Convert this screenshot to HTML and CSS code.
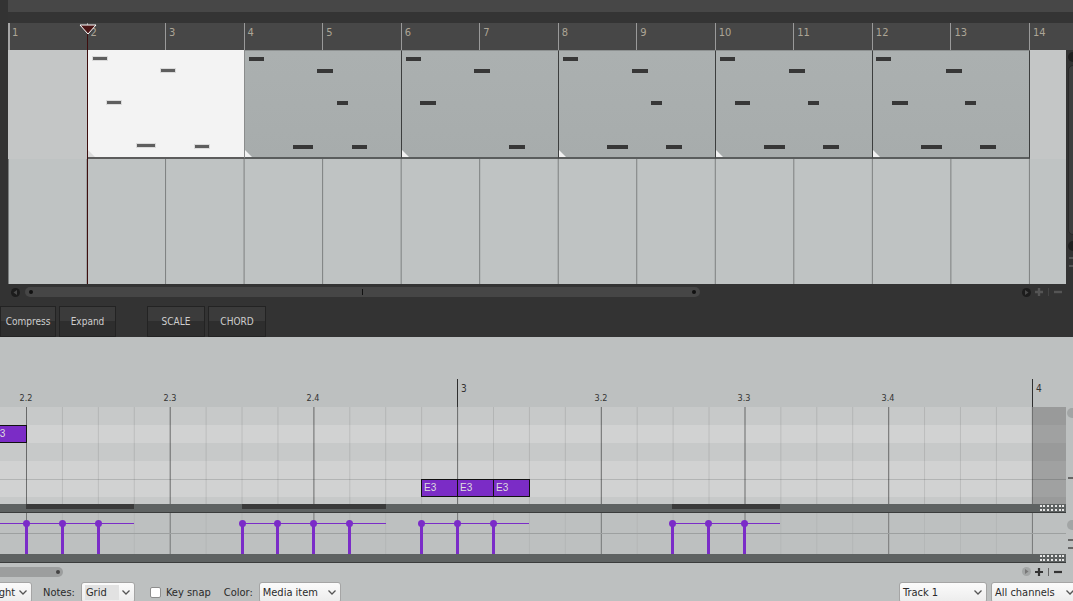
FILE: index.html
```html
<!DOCTYPE html>
<html lang="en">
<head>
<meta charset="utf-8">
<title>Editor</title>
<link rel="stylesheet" href="styles.css">
</head>
<body>
<div class="app">
  <section class="arrange">
    <div class="gutter"></div>
    <div class="arr-main">
      <div class="topbar"></div>
      <div class="topgap"></div>
      <div class="ruler">
        <div class="bar first">1</div><div class="bar">2</div><div class="bar">3</div><div class="bar">4</div><div class="bar">5</div><div class="bar">6</div><div class="bar">7</div><div class="bar">8</div><div class="bar">9</div><div class="bar">10</div><div class="bar">11</div><div class="bar">12</div><div class="bar">13</div><div class="bar">14</div>
      </div>
      <div class="lanes">
        <div class="tracks">
          <div class="track track1">
            <div class="lead"></div>
            <div class="clip clip-sel">
              <i class="n" style="left:4px;top:6px;width:16px"></i>
              <i class="n" style="left:72px;top:18px;width:16px"></i>
              <i class="n" style="left:18px;top:50px;width:16px"></i>
              <i class="n" style="left:48px;top:93px;width:20px"></i>
              <i class="n" style="left:106px;top:94px;width:16px"></i>
              <b class="fade"></b>
            </div>
            <div class="clip">
              <i class="n" style="left:4px;top:6px;width:15px"></i>
              <i class="n" style="left:72px;top:18px;width:16px"></i>
              <i class="n" style="left:92px;top:50px;width:11px"></i>
              <i class="n" style="left:48px;top:94px;width:20px"></i>
              <i class="n" style="left:107px;top:94px;width:15px"></i>
              <b class="fade"></b>
            </div>
            <div class="clip">
              <i class="n" style="left:4px;top:6px;width:15px"></i>
              <i class="n" style="left:72px;top:18px;width:16px"></i>
              <i class="n" style="left:18px;top:50px;width:16px"></i>
              <i class="n" style="left:107px;top:94px;width:16px"></i>
              <b class="fade"></b>
            </div>
            <div class="clip">
              <i class="n" style="left:4px;top:6px;width:15px"></i>
              <i class="n" style="left:73px;top:18px;width:16px"></i>
              <i class="n" style="left:92px;top:50px;width:11px"></i>
              <i class="n" style="left:48px;top:94px;width:21px"></i>
              <i class="n" style="left:107px;top:94px;width:16px"></i>
              <b class="fade"></b>
            </div>
            <div class="clip">
              <i class="n" style="left:4px;top:6px;width:15px"></i>
              <i class="n" style="left:73px;top:18px;width:16px"></i>
              <i class="n" style="left:19px;top:50px;width:15px"></i>
              <i class="n" style="left:92px;top:50px;width:11px"></i>
              <i class="n" style="left:48px;top:94px;width:21px"></i>
              <i class="n" style="left:107px;top:94px;width:16px"></i>
              <b class="fade"></b>
            </div>
            <div class="clip">
              <i class="n" style="left:3px;top:6px;width:15px"></i>
              <i class="n" style="left:73px;top:18px;width:16px"></i>
              <i class="n" style="left:19px;top:50px;width:16px"></i>
              <i class="n" style="left:92px;top:50px;width:11px"></i>
              <i class="n" style="left:48px;top:94px;width:21px"></i>
              <i class="n" style="left:107px;top:94px;width:16px"></i>
              <b class="fade"></b>
            </div>
          </div>
          <div class="track track2"></div>
        </div>
        <div class="vscroll">
          <span class="vs-btn"></span>
          <span class="vs-track"></span>
          <span class="vs-btn"></span>
          <span class="vs-mark"></span>
          <span class="vs-mark"></span>
        </div>
      </div>
      <div class="playhead"></div>
      <svg class="marker" width="18" height="11" viewBox="0 0 18 11"><polygon points="1,1 17,1 9,10" fill="#4a1515" stroke="#ffffff" stroke-width="1"/></svg>
    </div>
  </section>

  <div class="hscroll">
    <span class="circ dark"><svg width="9" height="9" viewBox="0 0 9 9"><polygon points="6,2 6,7 2.5,4.5" fill="#4a4a4a"/></svg></span>
    <div class="hs-track"><span class="hs-dot"></span><span class="hs-mark"></span><span class="hs-dot end"></span></div>
    <div class="zoomctl">
      <span class="circ dark"><svg width="9" height="9" viewBox="0 0 9 9"><polygon points="3,2 3,7 6.5,4.5" fill="#4a4a4a"/></svg></span>
      <svg class="pm" width="10" height="10" viewBox="0 0 10 10"><path d="M5 1v8M1 5h8" stroke="#555" stroke-width="2.4"/></svg>
      <span class="sep"></span>
      <svg class="pm" width="10" height="10" viewBox="0 0 10 10"><path d="M1 5h8" stroke="#555" stroke-width="2.4"/></svg>
    </div>
  </div>

  <div class="toolbar">
    <div class="btn w56">Compress</div>
    <div class="btn w57">Expand</div>
    <div class="btn w58 gap">SCALE</div>
    <div class="btn w58">CHORD</div>
  </div>

  <section class="midi">
    <div class="midi-body">
      <div class="midi-main">
        <div class="mruler">
          <span class="blab" style="left:26px">2.2</span>
          <span class="blab" style="left:170px">2.3</span>
          <span class="blab" style="left:313px">2.4</span>
          <span class="barline" style="left:457px"></span>
          <span class="barlab" style="left:461px">3</span>
          <span class="blab" style="left:601px">3.2</span>
          <span class="blab" style="left:744px">3.3</span>
          <span class="blab" style="left:888px">3.4</span>
          <span class="barline" style="left:1032px"></span>
          <span class="barlab" style="left:1036px">4</span>
        </div>
        <div class="roll">
          <div class="row dk"></div>
          <div class="row lt"></div>
          <div class="row dk"></div>
          <div class="row lt"></div>
          <div class="row lt sepline"></div>
          <div class="row dk short"></div>
          <div class="grid"></div>
          <div class="endzone"></div>
          <div class="note" style="left:-10px;top:18px;width:37px">E3</div>
          <div class="note" style="left:421px;top:72px;width:37px">E3</div>
          <div class="note" style="left:457px;top:72px;width:37px">E3</div>
          <div class="note" style="left:493px;top:72px;width:37px">E3</div>
        </div>
        <div class="mbar">
          <span class="seg" style="left:26px;width:108px"></span>
          <span class="seg" style="left:242px;width:144px"></span>
          <span class="seg" style="left:672px;width:108px"></span>
          <span class="grip"></span>
        </div>
        <div class="vel">
          <div class="vgrid"></div>
          <span class="hline"></span>
          <span class="vline" style="left:0;width:134px"></span>
          <span class="vline" style="left:242px;width:144px"></span>
          <span class="vline" style="left:421px;width:108px"></span>
          <span class="vline" style="left:672px;width:108px"></span>
          <span class="stem" style="left:25px"></span>
          <span class="stem" style="left:61px"></span>
          <span class="stem" style="left:97px"></span>
          <span class="stem" style="left:241px"></span>
          <span class="stem" style="left:276px"></span>
          <span class="stem" style="left:312px"></span>
          <span class="stem" style="left:348px"></span>
          <span class="stem" style="left:420px"></span>
          <span class="stem" style="left:456px"></span>
          <span class="stem" style="left:492px"></span>
          <span class="stem" style="left:671px"></span>
          <span class="stem" style="left:707px"></span>
          <span class="stem" style="left:743px"></span>
        </div>
        <div class="mbar"><span class="grip"></span></div>
      </div>
      <div class="mside">
        <span class="ms-circ c1"></span>
        <span class="ms-dash d1"></span>
        <span class="ms-circ c2"></span>
        <span class="ms-dash d2"></span>
        <span class="ms-dash d3"></span>
      </div>
    </div>
    <div class="mscroll">
      <div class="thumb"><span class="tdot"></span></div>
      <div class="zoomctl light">
        <span class="circ lite"><svg width="9" height="9" viewBox="0 0 9 9"><polygon points="3,2 3,7 6.5,4.5" fill="#777"/></svg></span>
        <svg class="pm" width="10" height="10" viewBox="0 0 10 10"><path d="M5 1v8M1 5h8" stroke="#333" stroke-width="2.2"/></svg>
        <span class="sep dk"></span>
        <svg class="pm" width="10" height="10" viewBox="0 0 10 10"><path d="M1 5h8" stroke="#333" stroke-width="2.2"/></svg>
      </div>
    </div>
    <div class="mtools">
      <div class="dd dd-first"><span class="ddtext">Right</span><svg class="chev" width="8" height="5" viewBox="0 0 8 5"><path d="M0.5 0.5 4 4 7.5 0.5" fill="none" stroke="#555" stroke-width="1.3"/></svg></div>
      <span class="lbl l-notes">Notes:</span>
      <div class="dd dd-grid"><span class="ddtext hl">Grid</span><svg class="chev" width="8" height="5" viewBox="0 0 8 5"><path d="M0.5 0.5 4 4 7.5 0.5" fill="none" stroke="#555" stroke-width="1.3"/></svg></div>
      <span class="check"></span>
      <span class="lbl l-key">Key snap</span>
      <span class="lbl l-color">Color:</span>
      <div class="dd dd-media"><span class="ddtext">Media item</span><svg class="chev" width="8" height="5" viewBox="0 0 8 5"><path d="M0.5 0.5 4 4 7.5 0.5" fill="none" stroke="#555" stroke-width="1.3"/></svg></div>
      <div class="dd dd-track"><span class="ddtext">Track 1</span><svg class="chev" width="8" height="5" viewBox="0 0 8 5"><path d="M0.5 0.5 4 4 7.5 0.5" fill="none" stroke="#555" stroke-width="1.3"/></svg></div>
      <div class="dd dd-chan"><span class="ddtext">All channels</span><svg class="chev" width="8" height="5" viewBox="0 0 8 5"><path d="M0.5 0.5 4 4 7.5 0.5" fill="none" stroke="#555" stroke-width="1.3"/></svg></div>
    </div>
  </section>
</div>
</body>
</html>
```

FILE: styles.css
```css
* { box-sizing: border-box; margin: 0; padding: 0; }
html, body { width: 1073px; height: 601px; overflow: hidden; }
body { background: #333; font-family: "DejaVu Sans Condensed", "DejaVu Sans", "Liberation Sans", sans-serif; }
.app { width: 1073px; height: 601px; display: flex; flex-direction: column; overflow: hidden; }

/* ---------- arrange view ---------- */
.arrange { display: flex; height: 284px; flex: 0 0 284px; }
.gutter { width: 8px; background: #333; }
.arr-main { width: 1065px; position: relative; display: flex; flex-direction: column; }
.topbar { height: 12px; background: #474747; }
.topgap { height: 11px; background: #343434; }
.ruler { height: 27px; background: #474747; display: flex; overflow: hidden; }
.bar { flex: 0 0 78.54px; border-left: 1px solid #9a9a9a; padding: 3px 0 0 3px; font-size: 11px; line-height: 13px; color: #aca596; }
.bar.first { border-left: 2px solid #a6a6a6; padding-left: 2px; }

.lanes { flex: 1; display: flex; }
.tracks { width: 1058px; display: flex; flex-direction: column; }
.track1 { height: 109px; background: #c4c6c6; display: flex; }
.track2 { flex: 1; background-color: #bfc3c3;
  background-image: linear-gradient(to right, #7c7f7f 1px, transparent 1px);
  background-size: 78.54px 100%; background-position: 0 0; }
.lead { flex: 0 0 80px; }
.clip { flex: 0 0 157px; height: 109px; position: relative;
  background: linear-gradient(#abb0b0, #a7acac);
  border-right: 1px solid #3c3e3e; border-top: 1px solid #8d9191; border-bottom: 2px solid #5a5d5d; }
.clip-sel { background: #f3f3f3; border-top: 0; border-right: 1px solid #8a8c8c; border-bottom: 2px solid #5c5c5c; }
.n { position: absolute; height: 4px; background: #373737; display: block; }
.clip-sel .n { background: #5e5e5e; border: 1px solid #dadada; height: 5px; }
.fade { position: absolute; left: 0; bottom: 0; width: 0; height: 0;
  border-left: 7px solid #f2f2f2; border-top: 7px solid transparent; }
.clip-sel .fade { border-left-color: #dcdcdc; }

.vscroll { width: 7px; background: #333; display: flex; flex-direction: column; align-items: flex-start; overflow: hidden; }
.vs-btn { width: 10px; height: 10px; border-radius: 50%; background: #1f1f1f; margin: 2px 0 0 2px; flex: 0 0 10px; }
.vs-track { width: 10px; flex: 0 0 170px; margin: 3px 0 4px 2px; background: #3e3e3e; border: 1px solid #2a2a2a; border-radius: 5px; }
.vs-mark { width: 8px; height: 2px; background: #555; margin: 6px 0 0 3px; }

.playhead { position: absolute; left: 79px; top: 33px; bottom: 0; width: 1px; background: #3e0e0e; }
.marker { position: absolute; left: 71px; top: 24px; }

/* ---------- arrange scrollbar ---------- */
.hscroll { height: 16px; flex: 0 0 16px; display: flex; align-items: center; background: #333; }
.circ { width: 9px; height: 9px; border-radius: 50%; display: flex; }
.circ.dark { background: #1c1c1c; }
.circ.lite { background: #a3a6a6; }
.hscroll > .circ { margin-left: 11px; }
.hs-track { margin-left: 5px; width: 675px; height: 10px; background: #464646; border-radius: 5px; position: relative; }
.hs-dot { position: absolute; left: 4px; top: 3px; width: 4px; height: 4px; border-radius: 50%; background: #111; }
.hs-dot.end { left: auto; right: 4px; }
.hs-mark { position: absolute; left: 337px; top: 2px; width: 1px; height: 6px; background: #111; }
.zoomctl { margin-left: auto; margin-right: 10px; display: flex; align-items: center; gap: 3px; }
.pm { display: block; }
.sep { width: 1px; height: 8px; background: #444; margin: 0 1px; }
.sep.dk { background: #666; }

/* ---------- toolbar ---------- */
.toolbar { height: 37px; flex: 0 0 37px; display: flex; align-items: flex-end; gap: 3px; background: #333; }
.btn { height: 31px; display: flex; align-items: center; justify-content: center;
  background: linear-gradient(#3b3b3b 0 50%, #2e2e2e 50% 100%);
  border: 1px solid #232323; color: #cdcdcd; font-size: 10px; }
.w56 { width: 56px; }
.w57 { width: 57px; }
.w58 { width: 58px; }
.btn.gap { margin-left: 28px; }

/* ---------- MIDI editor ---------- */
.midi { flex: 1; display: flex; flex-direction: column; background: #bdc0c0; }
.midi-body { display: flex; }
.midi-main { width: 1066px; display: flex; flex-direction: column; }
.mruler { height: 70px; position: relative; }
.blab { position: absolute; top: 56px; transform: translateX(-50%); font-size: 9px; line-height: 10px; color: #333; }
.barlab { position: absolute; top: 46px; font-size: 10px; line-height: 11px; color: #333; }
.barline { position: absolute; top: 42px; bottom: 0; width: 1px; background: #2e2e2e; }

.roll { height: 97px; position: relative; display: flex; flex-direction: column; }
.row { height: 18px; flex: 0 0 18px; }
.row.dk { background: #c7c9c9; }
.row.lt { background: #d1d2d2; }
.row.sepline { border-top: 1px solid #b2b4b4; }
.row.short { flex: 0 0 7px; height: 7px; }
.grid, .vgrid { position: absolute; left: 0; top: 0; bottom: 0; width: 1066px;
  background-image: linear-gradient(to right, rgba(0,0,0,0.42) 1px, transparent 1px),
                    linear-gradient(to right, rgba(0,0,0,0.10) 1px, transparent 1px);
  background-size: 143.71px 100%, 35.93px 100%;
  background-position: 26px 0, 26px 0; }
.grid { width: 1040px; }
.endzone { position: absolute; left: 1033px; top: 0; bottom: 0; right: 0; background: rgba(0,0,0,0.23); }
.note { position: absolute; height: 18px; background: #7b2cc6; border: 1px solid #111;
  color: #dedede; font-size: 10px; line-height: 16px; padding-left: 2px; font-family: "Liberation Sans", sans-serif; }

.mbar { height: 9px; flex: 0 0 9px; background: #5e6262; border-bottom: 1px solid #3a3c3c; position: relative; }
.seg { position: absolute; top: 0; height: 5px; background: #3a3a3a; }
.grip { position: absolute; right: 2px; top: 1px; width: 24px; height: 6px;
  border-top: 2px dotted #e6e6e6; border-bottom: 2px dotted #e6e6e6; }

.vel { height: 41px; flex: 0 0 41px; position: relative; background: #bdc0c0; }
.vgrid { background-image: linear-gradient(to right, rgba(0,0,0,0.35) 1px, transparent 1px),
                           linear-gradient(to right, rgba(0,0,0,0.05) 1px, transparent 1px); }
.hline { position: absolute; left: 0; right: 0; top: 20px; height: 1px; background: #9da0a0; }
.vline { position: absolute; top: 10px; height: 1px; background: #7b2cc8; }
.stem { position: absolute; top: 10px; bottom: 0; width: 3px; background: #7b2cc8; }
.stem::before { content: ""; position: absolute; left: -2px; top: -3px; width: 7px; height: 7px; border-radius: 50%; background: #7b2cc8; }

.mside { width: 7px; position: relative; overflow: hidden; }
.ms-circ { position: absolute; left: 1px; width: 10px; height: 10px; border-radius: 50%; background: #a2a5a5; }
.ms-circ.c1 { top: 71px; }
.ms-circ.c2 { top: 183px; }
.ms-dash { position: absolute; left: 2px; width: 6px; height: 2px; background: #666; }
.ms-dash.d1 { top: 140px; }
.ms-dash.d2 { top: 202px; }
.ms-dash.d3 { top: 210px; }

.mscroll { height: 17px; flex: 0 0 17px; display: flex; align-items: center; }
.thumb { width: 63px; height: 10px; background: #9c9e9e; border-radius: 0 5px 5px 0; position: relative; }
.tdot { position: absolute; right: 3px; top: 3px; width: 4px; height: 4px; border-radius: 50%; background: #444; }
.zoomctl.light { margin-right: 10px; }

.mtools { height: 21px; flex: 0 0 21px; display: flex; align-items: flex-start; padding-top: 2px;
  font-family: "DejaVu Sans Condensed", "DejaVu Sans", sans-serif; font-size: 11px; color: #2a2a2a; }
.dd { height: 21px; display: flex; align-items: center; justify-content: space-between;
  background: linear-gradient(#fbfbfb, #ececec); border: 1px solid #a5a5a5; border-radius: 3px;
  padding: 0 4px 0 3px; }
.ddtext { line-height: 15px; }
.ddtext.hl { background: #e2e2e2; padding: 0 12px 0 1px; }
.chev { display: block; }
.dd-first { width: 47px; margin-left: -15px; }
.lbl { line-height: 19px; margin-top: 1px; }
.l-notes { margin-left: 11px; }
.dd-grid { width: 54px; margin-left: 6px; }
.check { width: 11px; height: 11px; background: #fff; border: 1px solid #8d8d8d; border-radius: 2px; margin: 5px 0 0 15px; }
.l-key { margin-left: 5px; }
.l-color { margin-left: 13px; }
.dd-media { width: 82px; margin-left: 6px; }
.dd-track { width: 88px; margin-left: auto; }
.dd-chan { width: 88px; margin-left: 4px; margin-right: -6px; }
```
